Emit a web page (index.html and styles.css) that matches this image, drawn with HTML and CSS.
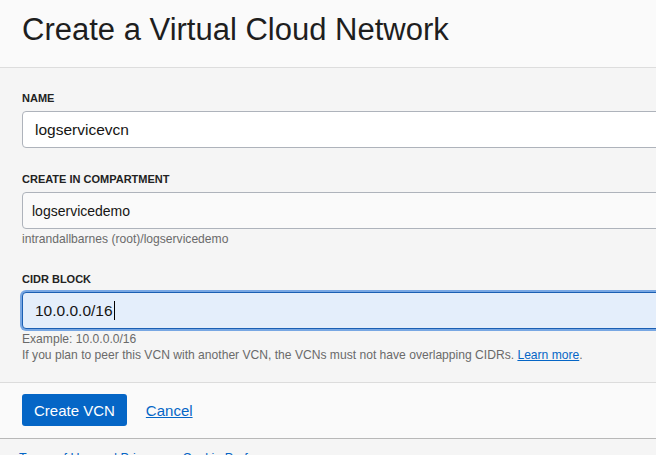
FILE: index.html
```html
<!DOCTYPE html>
<html lang="en">
<head>
<meta charset="utf-8">
<title>Create a Virtual Cloud Network</title>
<link rel="stylesheet" href="styles.css">
</head>
<body>
<div class="page">
  <header class="header">
    <h1 class="title">Create a Virtual Cloud Network</h1>
  </header>
  <main class="form">
    <div class="field">
      <div class="label">NAME</div>
      <div class="control">logservicevcn</div>
    </div>
    <div class="field">
      <div class="label">CREATE IN COMPARTMENT</div>
      <div class="control control-select">logservicedemo</div>
      <div class="hint hint-first">intrandallbarnes (root)/logservicedemo</div>
    </div>
    <div class="field field-cidr">
      <div class="label">CIDR BLOCK</div>
      <div class="control control-focus">10.0.0.0/16<span class="caret"></span></div>
      <div class="hint hint-first">Example: 10.0.0.0/16</div>
      <div class="hint">If you plan to peer this VCN with another VCN, the VCNs must not have overlapping CIDRs. <a class="link" href="#">Learn more</a>.</div>
    </div>
  </main>
  <div class="actions">
    <button class="btn-primary" type="button">Create VCN</button>
    <a class="cancel" href="#">Cancel</a>
  </div>
  <footer class="footer">
    <a class="footer-link" href="#">Terms of Use and Privacy</a>
    <a class="footer-link" href="#">Cookie Preferences</a>
  </footer>
</div>
</body>
</html>
```
FILE: styles.css
```css
html, body {
  margin: 0;
  padding: 0;
}
body {
  background: #f5f5f5;
  font-family: "Liberation Sans", Arial, sans-serif;
  color: #161513;
  overflow: hidden;
}
.page {
  width: 656px;
  overflow: hidden;
}
.header {
  background: #fafafa;
  border-bottom: 1px solid #dddddd;
  padding: 13px 22px 20px;
}
.title {
  margin: 0;
  font-size: 31px;
  line-height: 34px;
  font-weight: 400;
  color: #1e1e1e;
}
.form {
  padding: 23px 0 19px 22px;
  border-bottom: 1px solid #dcdcdc;
}
.field + .field {
  margin-top: 24px;
}
.field-cidr {
  margin-top: 25px !important;
}
.label {
  font-size: 11px;
  line-height: 14px;
  font-weight: 700;
  color: #222222;
  margin-bottom: 6px;
}
.control {
  box-sizing: border-box;
  width: 700px;
  height: 37px;
  border: 1px solid #aeb3bb;
  border-radius: 4px;
  background: #ffffff;
  display: flex;
  align-items: center;
  padding-left: 12px;
  font-size: 15.5px;
  color: #161513;
}
.control-select {
  background: #fafafa;
  padding-left: 9px;
  font-size: 14px;
}
.control-focus {
  background: #e4eefb;
  border-color: #1b5fb3;
  box-shadow: 0 0 0 2px #78a7e3;
}
.caret {
  display: inline-block;
  width: 1px;
  height: 19px;
  background: #000000;
  margin-left: 1px;
}
.hint {
  font-size: 12.1px;
  line-height: 16px;
  color: #6a6a6a;
}
.hint-first {
  margin-top: 2px;
}
.link {
  color: #0566c6;
  text-decoration: underline;
}
.actions {
  background: #fafafa;
  border-bottom: 1px solid #b8b8b8;
  padding: 11px 22px 12px;
  display: flex;
  align-items: center;
  gap: 19px;
}
.btn-primary {
  height: 32px;
  padding: 0 12px;
  border: none;
  border-radius: 3px;
  background: #0566c6;
  color: #ffffff;
  font-family: "Liberation Sans", Arial, sans-serif;
  font-size: 15px;
}
.cancel {
  color: #0566c6;
  font-size: 15px;
  text-decoration: underline;
}
.footer {
  padding: 11px 19px 0;
  display: flex;
  gap: 21px;
}
.footer-link {
  color: #0566c6;
  font-size: 12.5px;
  line-height: 16px;
  text-decoration: underline;
}
```
